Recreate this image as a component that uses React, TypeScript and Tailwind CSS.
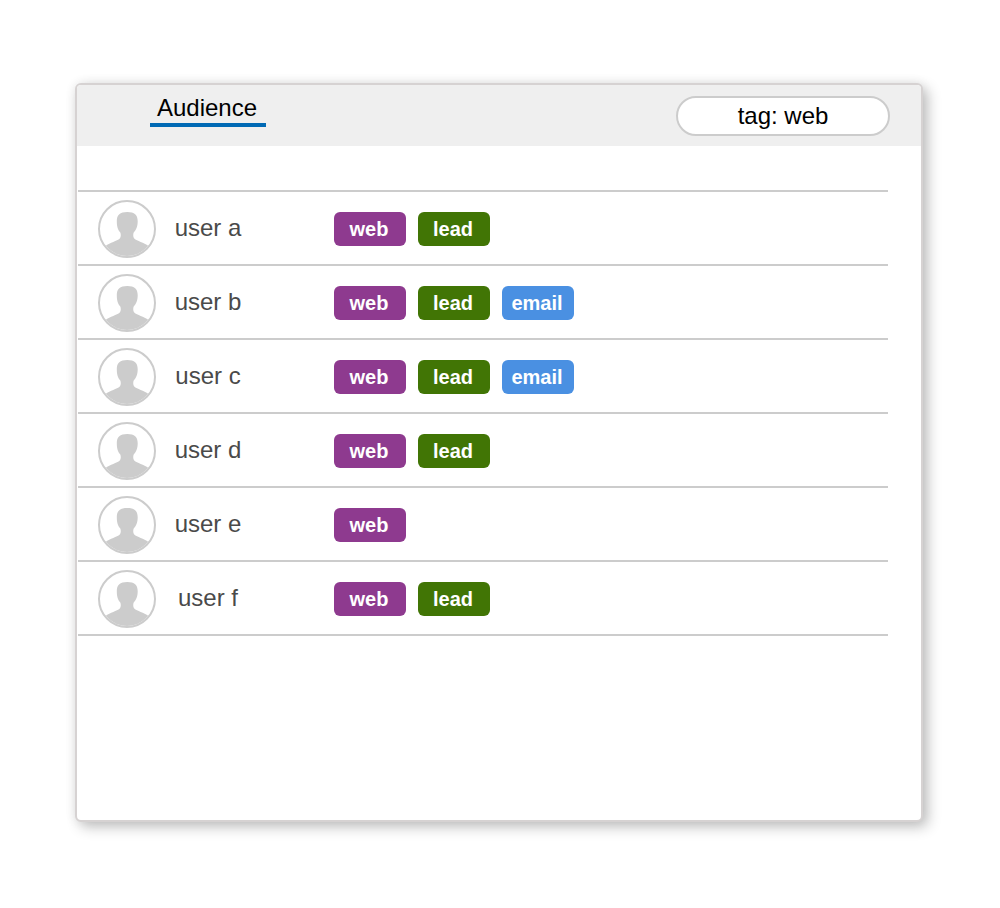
const USERS = [
  { name: "user a", tags: ["web", "lead"] },
  { name: "user b", tags: ["web", "lead", "email"] },
  { name: "user c", tags: ["web", "lead", "email"] },
  { name: "user d", tags: ["web", "lead"] },
  { name: "user e", tags: ["web"] },
  { name: "user f", tags: ["web", "lead"] },
];

const Tag = ({ label }: { label: string }) => {
  const color =
    label === "web" ? "bg-[#8e3a8f]" : label === "lead" ? "bg-[#417505]" : "bg-[#4a90e2]";
  return (
    <span
      className={`flex h-[34px] w-[72px] items-center justify-center rounded-[6px] pr-[2px] text-[20px] font-bold text-white ${color}`}
    >
      {label}
    </span>
  );
};

const Avatar = () => (
  <div className="h-[58px] w-[58px] shrink-0 overflow-hidden rounded-full border-2 border-[#cccccc] bg-white">
    <svg viewBox="0 0 54 54" className="h-full w-full">
      <path
        d="M27.3 10C20 10 16.8 13 16.8 19C16.8 25 18 28 20.3 30.5C21 32.5 21 35 19.8 36.5C17 39 10 40.5 5.5 44A26 26 0 0 0 48.5 44C44 40.5 37 39 34.2 36.5C33 35 33 32.5 33.7 30.5C36 28 37.7 25 37.7 19C37.7 13 34.5 10 27.3 10Z"
        fill="#cccccc"
      />
    </svg>
  </div>
);

const App = () => {
  return (
    <div className="min-h-[908px] w-full bg-white pl-[75px] pt-[83px] font-['Liberation_Sans',Arial,sans-serif]">
      <div className="h-[739px] w-[848px] overflow-hidden rounded-[6px] border-2 border-[#d6d2d2] bg-white shadow-[5px_5px_14px_rgba(0,0,0,0.24),0_0_12px_rgba(0,0,0,0.07)]">
        <header className="flex h-[61px] items-start justify-between bg-[#efefef] pl-[73px] pr-[31px]">
          <div className="flex h-[42px] w-[116px] items-end justify-center border-b-4 border-[#0069b4] pb-[1px] pr-[2px] text-[24px] leading-[28px] text-black">
            Audience
          </div>
          <div className="mt-[11px] flex h-[40px] w-[214px] items-center justify-center rounded-full border-2 border-[#cccccc] bg-white text-[24px] text-black">
            tag: web
          </div>
        </header>
        <div className="ml-[1px] mt-[44px] w-[810px] border-t-2 border-[#cccccc]">
          {USERS.map((user) => (
            <div key={user.name} className="flex h-[74px] items-center border-b-2 border-[#cccccc] pl-[20px] pt-[2px]">
              <Avatar />
              <div className="w-[104px] pb-[2px] text-center text-[24px] text-[#4a4a4a]">{user.name}</div>
              <div className="ml-[74px] flex gap-[12px]">
                {user.tags.map((tag) => (
                  <Tag key={tag} label={tag} />
                ))}
              </div>
            </div>
          ))}
        </div>
      </div>
    </div>
  );
};

export default App;
